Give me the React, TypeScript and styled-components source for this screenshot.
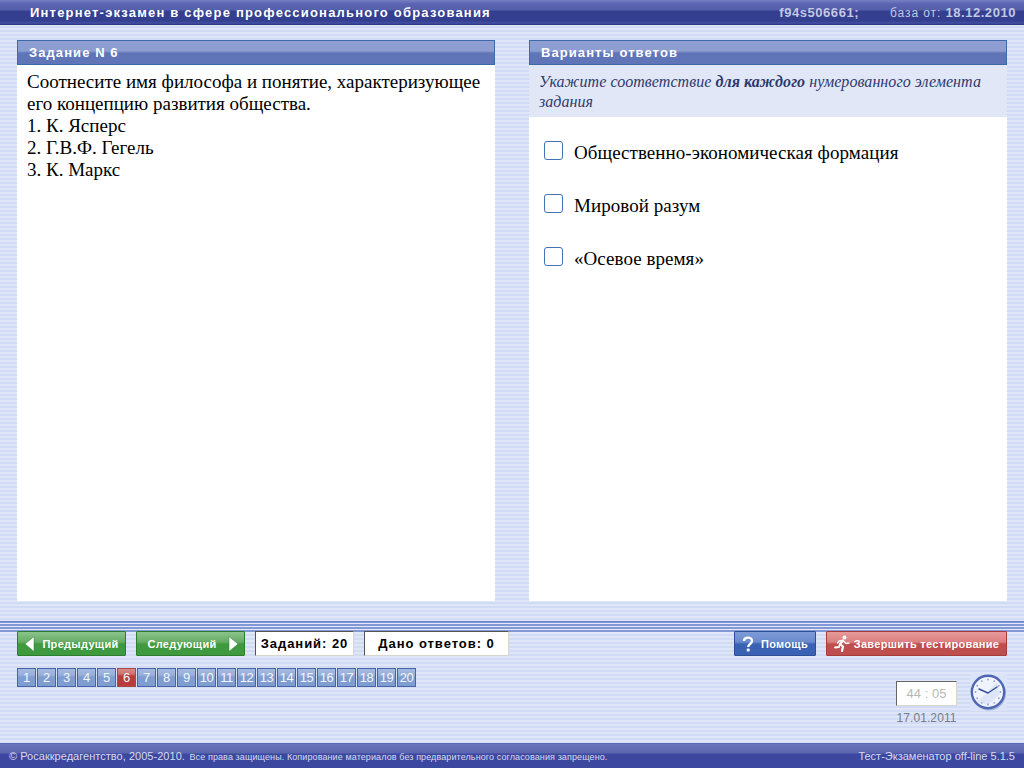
import React from "react";
import styled, { createGlobalStyle } from "styled-components";

const GlobalStyle = createGlobalStyle`
  html, body {
    margin: 0;
    padding: 0;
    overflow: hidden;
  }
`;

const Page = styled.div`
  width: 1024px;
  height: 768px;
  display: flex;
  flex-direction: column;
  font-family: "Liberation Sans", Arial, sans-serif;
  background: repeating-linear-gradient(to bottom, #dfe6f9 0 2px, #d2dbf4 2px 4px);
`;

const TopBar = styled.header`
  height: 25px;
  box-sizing: border-box;
  flex: none;
  display: flex;
  align-items: center;
  justify-content: space-between;
  padding: 0 8px 0 30px;
  color: #fff;
  background: linear-gradient(to bottom, #7880c4 0, #5a64b0 4px, #5560ac 10px, #343f90 11px, #343f90 21px, #4450a4 23px, #28327c 25px);
`;

const Title = styled.div`
  font-size: 13px;
  font-weight: bold;
  letter-spacing: 1.2px;
`;

const Meta = styled.div`
  display: flex;
  align-items: baseline;
  color: #c3c8e4;
  font-size: 12px;
  letter-spacing: 0.9px;
`;

const MetaStrong = styled.b<{ $gap?: number }>`
  font-size: 13px;
  font-weight: bold;
  letter-spacing: 0.55px;
  margin-right: ${(p) => p.$gap ?? 0}px;
`;

const Main = styled.main`
  flex: none;
  height: 561px;
  margin-top: 15px;
  padding: 0 17px;
  display: flex;
  gap: 34px;
`;

const Panel = styled.section`
  flex: 1;
  display: flex;
  flex-direction: column;
  background: #fff;
`;

const PanelHead = styled.h2`
  margin: 0;
  height: 25px;
  flex: none;
  box-sizing: border-box;
  border: 1px solid #3c6aa6;
  padding-left: 11px;
  line-height: 23px;
  color: #fff;
  font-size: 13px;
  font-weight: bold;
  letter-spacing: 1.08px;
  background: linear-gradient(to bottom, #8f9fd4 0, #8e9dd0 10px, #6074b8 12px, #6074b8 100%);
`;

const Question = styled.div`
  padding: 6px 10px;
  color: #000;
  font-family: "Liberation Serif", "Times New Roman", serif;
  font-size: 19px;
  line-height: 22px;
`;

const Hint = styled.div`
  height: 52px;
  flex: none;
  box-sizing: border-box;
  padding: 7px 10px 0;
  background: #e2e7f7;
  color: #2c3a6e;
  font-family: "Liberation Serif", "Times New Roman", serif;
  font-style: italic;
  font-size: 16px;
  letter-spacing: 0.05px;
  line-height: 20px;
`;

const Answers = styled.ul`
  list-style: none;
  margin: 0;
  padding: 9px 15px 0;
`;

const Answer = styled.li`
  height: 53px;
  display: flex;
  align-items: center;
  gap: 11px;
  font-family: "Liberation Serif", "Times New Roman", serif;
  font-size: 19px;
  letter-spacing: 0.05px;
  color: #000;
`;

const Check = styled.span`
  width: 19px;
  height: 19px;
  flex: none;
  box-sizing: border-box;
  border: 1px solid #4273b4;
  border-radius: 3px;
  background: #fff;
  position: relative;
  top: -2px;
`;

const Bottom = styled.div`
  flex: 1;
  margin-top: 20px;
  background:
    linear-gradient(#6a80c2, #6a80c2) top / 100% 1px no-repeat,
    repeating-linear-gradient(to bottom, #8298d4 0 2px, #e3e9fa 2px 3px) top / 100% 12px no-repeat;
  padding: 10px 17px 0;
`;

const ControlRow = styled.div`
  display: flex;
  align-items: flex-start;
`;

const toneColors = {
  green: { top: "#8cc48c", mid: "#66ac64", low: "#3f9a3f", line: "#2c7d2c" },
  blue: { top: "#7f9bd6", mid: "#6a8ace", low: "#3a62b4", line: "#2c4f96" },
  red: { top: "#e89a9a", mid: "#dc8080", low: "#bf4f4f", line: "#a83c3c" },
};

type Tone = keyof typeof toneColors;

const ActionButton = styled.button<{ $tone: Tone; $width: number; $gap?: number; $iconGap?: number; $shift?: number }>`
  width: ${(p) => p.$width}px;
  height: 25px;
  flex: none;
  box-sizing: border-box;
  margin: 0 ${(p) => p.$gap ?? 0}px 0 0;
  padding: 0 0 0 ${(p) => p.$shift ?? 0}px;
  display: flex;
  align-items: center;
  justify-content: center;
  gap: ${(p) => p.$iconGap ?? 7}px;
  border: 1px solid ${(p) => toneColors[p.$tone].line};
  border-radius: 1px;
  color: #fff;
  font-family: "Liberation Sans", Arial, sans-serif;
  font-size: 11px;
  font-weight: bold;
  letter-spacing: 0.3px;
  background: linear-gradient(
    to bottom,
    ${(p) => toneColors[p.$tone].top} 0,
    ${(p) => toneColors[p.$tone].mid} 10px,
    ${(p) => toneColors[p.$tone].low} 12px,
    ${(p) => toneColors[p.$tone].low} 100%
  );
`;

const Counter = styled.div<{ $width: number; $gap?: number }>`
  width: ${(p) => p.$width}px;
  height: 25px;
  flex: none;
  box-sizing: border-box;
  margin-right: ${(p) => p.$gap ?? 0}px;
  border: 1px solid;
  border-color: #555 #d8d6cc #d8d6cc #555;
  background: #fff;
  color: #000;
  text-align: center;
  line-height: 23px;
  font-family: "Liberation Sans", Arial, sans-serif;
  font-size: 13px;
  font-weight: bold;
  letter-spacing: 0.95px;
`;

const Spacer = styled.div`
  flex: 1;
`;

const LowerRow = styled.div`
  display: flex;
  justify-content: space-between;
  align-items: flex-start;
  margin-top: 12px;
`;

const Pager = styled.div`
  display: flex;
`;

const PageCell = styled.div<{ $current?: boolean }>`
  width: 19px;
  height: 19px;
  margin-right: 1px;
  box-sizing: border-box;
  border: 1px solid ${(p) => (p.$current ? "#a84848" : "#4a62a8")};
  color: #f2f5ff;
  font-size: 13px;
  letter-spacing: -0.4px;
  line-height: 17px;
  text-align: center;
  background: ${(p) =>
    p.$current
      ? "linear-gradient(to bottom, #d88a8a 0, #cf7272 5px, #b83c3c 7px, #b83c3c 100%)"
      : "linear-gradient(to bottom, #a4b8e0 0, #98b0da 6px, #7f9ecf 8px, #7f9ecf 100%)"};
`;

const TimerArea = styled.div`
  display: flex;
  align-items: flex-start;
  margin-top: 6px;
`;

const TimerCol = styled.div`
  display: flex;
  flex-direction: column;
  align-items: center;
  margin-top: 7px;
`;

const TimerBox = styled.div`
  width: 61px;
  height: 25px;
  box-sizing: border-box;
  border: 1px solid;
  border-color: #666 #d8d6cc #d8d6cc #666;
  background: #fff;
  color: #b8b8b8;
  text-align: center;
  font-size: 13px;
  line-height: 23px;
`;

const DateText = styled.div`
  margin-top: 5px;
  color: #777c88;
  font-size: 12px;
  letter-spacing: 0.1px;
`;

const ClockWrap = styled.div`
  margin-left: 13px;
  width: 37px;
  height: 37px;
`;

const Footer = styled.footer`
  height: 25px;
  flex: none;
  box-sizing: border-box;
  display: flex;
  align-items: center;
  justify-content: space-between;
  padding: 0 9px;
  color: #d6daf0;
  background: linear-gradient(to bottom, #5560ac 0, #6a74bc 1px, #5b66b0 10px, #3c48a0 11px, #3c48a0 100%);
`;

const Legal = styled.div`
  font-size: 9px;
  letter-spacing: 0.1px;
  white-space: nowrap;
`;

const LegalLead = styled.span`
  font-size: 11px;
  letter-spacing: 0.03px;
  margin-right: 2px;
`;

const Version = styled.div`
  font-size: 11px;
`;

const ArrowIcon = ({ right }: { right?: boolean }) => (
  <svg width="11" height="16" viewBox="0 0 11 16">
    <path d={right ? "M1 0.5 L10 8 L1 15.5 Z" : "M10 0.5 L1 8 L10 15.5 Z"} fill="#fff" stroke="#2f7d2f" strokeWidth="0.5" />
  </svg>
);

const RunnerIcon = () => (
  <svg width="16" height="17" viewBox="0 0 16 17" fill="none" stroke="#fff" strokeLinecap="round" strokeLinejoin="round">
    <circle cx="10.5" cy="2.5" r="2" fill="#fff" stroke="none" />
    <path d="M9 5.5 L6 9 L9 11.5 L8 16" strokeWidth="2.2" />
    <path d="M6 9 L5 12 L1 12.5" strokeWidth="1.8" />
    <path d="M9 5.5 L5 6 L3.5 8 M9.5 6 L12 8.5 L15 8" strokeWidth="1.4" />
  </svg>
);

const ClockIcon = () => (
  <svg width="37" height="37" viewBox="0 0 37 37">
    <rect width="37" height="37" fill="#dbe3f8" />
    <circle cx="19" cy="19.5" r="17" fill="#a9b4dc" />
    <circle cx="18" cy="18" r="16.2" fill="#f0f4fd" stroke="#4f66b4" strokeWidth="2.4" />
    <path d="M7 28 L27 8 L30 20 L18 31 Z" fill="#dde5f6" />
    {[0, 30, 60, 90, 120, 150, 180, 210, 240, 270, 300, 330].map((a) => (
      <circle
        key={a}
        cx={18 + 12.5 * Math.sin((a * Math.PI) / 180)}
        cy={18 - 12.5 * Math.cos((a * Math.PI) / 180)}
        r="0.9"
        fill="#8fa2d4"
      />
    ))}
    <path d="M18 19 L9 15 M18 19 L27 13" stroke="#3a4f9c" strokeWidth="1.5" strokeLinecap="round" />
  </svg>
);

const pages = Array.from({ length: 20 }, (_, i) => i + 1);

export default function App() {
  return (
    <Page>
      <GlobalStyle />
      <TopBar>
        <Title>Интернет-экзамен в сфере профессионального образования</Title>
        <Meta>
          <MetaStrong $gap={31}>f94s506661;</MetaStrong>
          база от:&nbsp;<MetaStrong>18.12.2010</MetaStrong>
        </Meta>
      </TopBar>

      <Main>
        <Panel>
          <PanelHead>Задание N 6</PanelHead>
          <Question>
            Соотнесите имя философа и понятие, характеризующее его концепцию развития общества.
            <br />
            1. К. Ясперс
            <br />
            2. Г.В.Ф. Гегель
            <br />
            3. К. Маркс
          </Question>
        </Panel>
        <Panel>
          <PanelHead>Варианты ответов</PanelHead>
          <Hint>
            Укажите соответствие <b>для каждого</b> нумерованного элемента задания
          </Hint>
          <Answers>
            <Answer>
              <Check />
              Общественно-экономическая формация
            </Answer>
            <Answer>
              <Check />
              Мировой разум
            </Answer>
            <Answer>
              <Check />
              «Осевое время»
            </Answer>
          </Answers>
        </Panel>
      </Main>

      <Bottom>
        <ControlRow>
          <ActionButton $tone="green" $width={109} $gap={10}>
            <ArrowIcon />
            Предыдущий
          </ActionButton>
          <ActionButton $tone="green" $width={109} $gap={10} $iconGap={11} $shift={5}>
            Следующий
            <ArrowIcon right />
          </ActionButton>
          <Counter $width={99} $gap={10}>Заданий: 20</Counter>
          <Counter $width={145}>Дано ответов: 0</Counter>
          <Spacer />
          <ActionButton $tone="blue" $width={82} $gap={10}>
            <svg width="12" height="16" viewBox="0 0 12 16">
              <path d="M2 5 C2 0.5 10 0.5 10 5 C10 8 6.2 8 6.2 11" fill="none" stroke="#fff" strokeWidth="2.4" />
              <rect x="4.8" y="12.6" width="2.8" height="2.8" fill="#fff" />
            </svg>
            Помощь
          </ActionButton>
          <ActionButton $tone="red" $width={181} $iconGap={4}>
            <RunnerIcon />
            Завершить тестирование
          </ActionButton>
        </ControlRow>

        <LowerRow>
          <Pager>
            {pages.map((n) => (
              <PageCell key={n} $current={n === 6}>
                {n}
              </PageCell>
            ))}
          </Pager>
          <TimerArea>
            <TimerCol>
              <TimerBox>44 : 05</TimerBox>
              <DateText>17.01.2011</DateText>
            </TimerCol>
            <ClockWrap>
              <ClockIcon />
            </ClockWrap>
          </TimerArea>
        </LowerRow>
      </Bottom>

      <Footer>
        <Legal>
          <LegalLead>© Росаккредагентство, 2005-2010.</LegalLead> Все права защищены. Копирование материалов без предварительного согласования запрещено.
        </Legal>
        <Version>Тест-Экзаменатор off-line 5.1.5</Version>
      </Footer>
    </Page>
  );
}
